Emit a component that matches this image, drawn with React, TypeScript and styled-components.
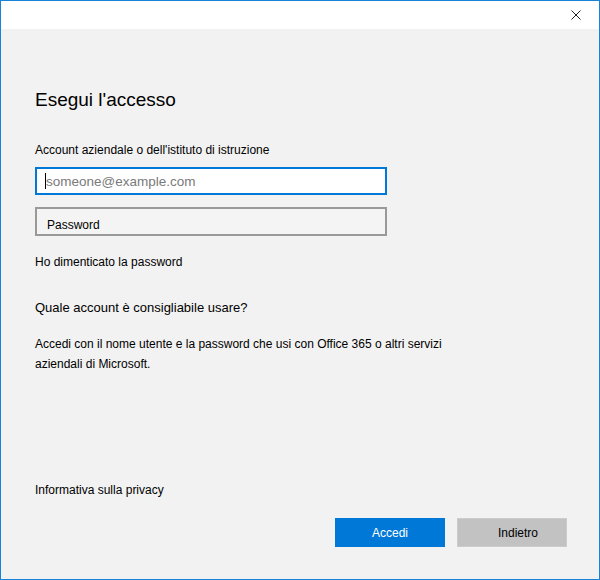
import React from 'react'
import styled, { createGlobalStyle } from 'styled-components'

const Global = createGlobalStyle`
  html, body {
    margin: 0;
    padding: 0;
    background: #ffffff;
  }
  * {
    box-sizing: border-box;
  }
`

const Window = styled.div`
  width: 600px;
  height: 580px;
  border: 1px solid #1883d7;
  display: flex;
  flex-direction: column;
  background: #f2f2f2;
  font-family: 'Liberation Sans', Arial, sans-serif;
  color: #000;
`

const TitleBar = styled.div`
  height: 28px;
  background: #ffffff;
  display: flex;
  justify-content: flex-end;
  align-items: center;
`

const CloseButton = styled.button`
  width: 46px;
  height: 28px;
  border: 0;
  padding: 0;
  background: transparent;
  display: flex;
  align-items: center;
  justify-content: center;
  cursor: pointer;
`

const Content = styled.div`
  flex: 1;
  display: flex;
  flex-direction: column;
  padding: 59px 32px 32px 34px;
`

const Title = styled.h1`
  margin: 0;
  font-size: 19px;
  line-height: 24px;
  font-weight: 400;
`

const Label = styled.div<{ $top: number }>`
  margin-top: ${p => p.$top}px;
  font-size: 12px;
  line-height: 16px;
`

const FieldBox = styled.div<{ $focused?: boolean; $top: number; $height: number }>`
  position: relative;
  margin-top: ${p => p.$top}px;
  width: 352px;
  height: ${p => p.$height}px;
  border: 2px solid ${p => (p.$focused ? '#0078d7' : '#999999')};
  background: ${p => (p.$focused ? '#ffffff' : '#f4f4f4')};
`

const Field = styled.input<{ $size: number; $indent: number; $drop: number }>`
  width: 100%;
  height: 100%;
  border: 0;
  outline: none;
  background: transparent;
  padding: ${p => p.$drop}px 0 0 ${p => p.$indent}px;
  font-family: 'Liberation Sans', Arial, sans-serif;
  font-size: ${p => p.$size}px;
  color: #000;

  &::placeholder {
    color: ${p => (p.$size > 12 ? '#7a7a7a' : '#000000')};
    opacity: 1;
  }
`

const Caret = styled.span`
  position: absolute;
  left: 8px;
  top: 4px;
  width: 1px;
  height: 16px;
  background: #000;
`

const Link = styled.a<{ $top: number }>`
  display: block;
  margin-top: ${p => p.$top}px;
  font-size: 12px;
  line-height: 16px;
  color: #000;
  text-decoration: none;
  cursor: pointer;
`

const Heading = styled.div`
  margin-top: 30px;
  font-size: 13px;
  line-height: 16px;
`

const Paragraph = styled.p`
  margin: 18px 0 0;
  width: 420px;
  font-size: 12px;
  line-height: 20px;
`

const Footer = styled.div`
  margin-top: auto;
  display: flex;
  flex-direction: column;
`

const ButtonRow = styled.div`
  margin-top: 20px;
  display: flex;
  justify-content: flex-end;
  gap: 12px;
`

const Button = styled.button<{ $primary?: boolean }>`
  width: 110px;
  height: 29px;
  border: 1px solid ${p => (p.$primary ? '#0078d7' : '#cccccc')};
  background: ${p => (p.$primary ? '#0078d7' : '#c2c2c2')};
  color: ${p => (p.$primary ? '#ffffff' : '#000000')};
  font-family: 'Liberation Sans', Arial, sans-serif;
  font-size: 12px;
  padding: 0 0 0 ${p => (p.$primary ? 0 : 12)}px;
  cursor: pointer;
`

export default function App() {
  return (
    <>
      <Global />
      <Window>
        <TitleBar>
          <CloseButton aria-label="Chiudi">
            <svg width="10" height="10" viewBox="0 0 10 10">
              <path d="M0.5 0.5 L9.5 9.5 M9.5 0.5 L0.5 9.5" stroke="#222" strokeWidth="1" fill="none" />
            </svg>
          </CloseButton>
        </TitleBar>
        <Content>
          <Title>Esegui l'accesso</Title>
          <Label $top={30}>Account aziendale o dell'istituto di istruzione</Label>
          <FieldBox $focused $top={9} $height={28}>
            <Field $size={13.5} $indent={9} $drop={0} placeholder="someone@example.com" />
            <Caret />
          </FieldBox>
          <FieldBox $top={12} $height={29}>
            <Field $size={12} $indent={10} $drop={6} type="password" placeholder="Password" />
          </FieldBox>
          <Link $top={18}>Ho dimenticato la password</Link>
          <Heading>Quale account è consigliabile usare?</Heading>
          <Paragraph>
            Accedi con il nome utente e la password che usi con Office 365 o altri servizi aziendali di Microsoft.
          </Paragraph>
          <Footer>
            <Link $top={0}>Informativa sulla privacy</Link>
            <ButtonRow>
              <Button $primary>Accedi</Button>
              <Button>Indietro</Button>
            </ButtonRow>
          </Footer>
        </Content>
      </Window>
    </>
  )
}
